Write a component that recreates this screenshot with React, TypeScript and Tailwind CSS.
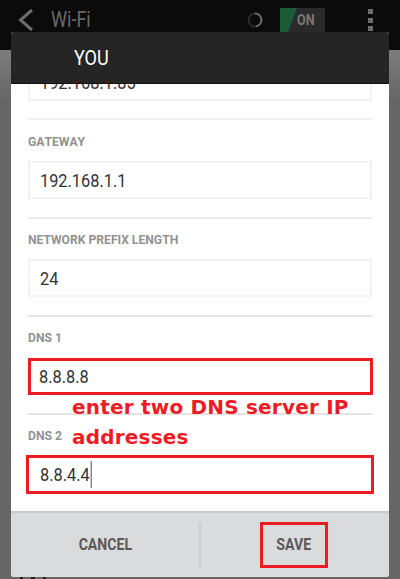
import React from "react";

const font = { fontFamily: "Roboto, 'Liberation Sans', sans-serif" };

function Label({ children }: { children: React.ReactNode }) {
  return (
    <div className="flex h-[40px] items-center">
      <span className="inline-block origin-left scale-x-[0.9] whitespace-nowrap text-[13.5px] font-bold text-[#929292] [font-kerning:none]">{children}</span>
    </div>
  );
}

function Field({ children, caret, className }: { children: React.ReactNode; caret?: boolean; className: string }) {
  return (
    <div className={`flex shrink-0 items-center ${className}`}>
      <span className="inline-flex origin-left scale-x-[0.86] items-center whitespace-nowrap text-[19px] leading-[27px] text-[#333333]">
        {children}
        {caret && <span className="ml-px inline-block h-[27px] w-px bg-[#333333]" />}
      </span>
    </div>
  );
}

export default function App() {
  return (
    <div className="relative flex h-[579px] w-[400px] flex-col overflow-hidden bg-[#666666]" style={font}>
      <div className="flex h-[50px] shrink-0 items-start bg-[#0b0b0b]">
        <svg width="16" height="24" viewBox="0 0 16 24" className="ml-[17px] mt-[8px]" fill="none" stroke="#6b6b6b" strokeWidth="3">
          <path d="M15 2 L3.5 12 L15 22" />
        </svg>
        <span className="ml-[18px] mt-[6px] inline-block origin-left scale-x-[0.82] text-[22px] leading-[28px] text-[#6a6a6a]">Wi-Fi</span>
      </div>
      <div className="h-[50px] shrink-0 bg-gradient-to-b from-[#7c7c7c] to-[#666666]" />
      <div className="mt-auto flex h-[2px] gap-[8px] pl-[20px]">
        <span className="block h-[2px] w-[3px] bg-[#222222]" />
        <span className="block h-[2px] w-[4px] bg-[#222222]" />
        <span className="block h-[2px] w-[3px] bg-[#222222]" />
      </div>

      <div className="absolute left-[247px] top-[12px]">
        <svg width="16" height="16" viewBox="0 0 16 16" fill="none" strokeWidth="2">
          <circle cx="8" cy="8" r="6.5" stroke="#2b2b2b" />
          <path d="M8 1.5 A6.5 6.5 0 0 1 9 14.4" stroke="#6a6a6a" />
        </svg>
      </div>
      <div className="absolute left-[280px] top-[8px] flex h-[24px] w-[45px] items-center justify-end overflow-hidden bg-[#2a2a2a] pr-[9px]">
        <svg width="45" height="24" viewBox="0 0 45 24" className="absolute left-0 top-0">
          <path d="M0 0 H17 L8 24 H0 Z" fill="#1d5a37" />
        </svg>
        <span className="relative inline-block scale-x-[0.9] text-[14px] font-bold text-[#7a7a7a]">ON</span>
      </div>
      <div className="absolute left-[368px] top-[9px] flex flex-col gap-[3.5px]">
        <span className="block h-[5px] w-[5px] bg-[#6e6e6e]" />
        <span className="block h-[5px] w-[5px] bg-[#6e6e6e]" />
        <span className="block h-[5px] w-[5px] bg-[#6e6e6e]" />
      </div>

      <div className="absolute left-[11px] top-[32px] flex h-[545px] w-[378px] flex-col overflow-hidden rounded-[3px] bg-white">
        <div className="flex h-[52px] shrink-0 items-center border-b border-[#111111] bg-[#252525] pl-[63px] pt-[3px]">
          <span className="inline-block origin-left scale-x-[0.86] text-[21px] text-white">YOU</span>
        </div>

        <div className="relative flex min-h-0 flex-1 flex-col overflow-hidden px-[17px]">
          <div className="-mt-[21px] flex shrink-0 flex-col">
            <Field className="h-[38px] border-2 border-[#f2f2f2] pl-[10px]">192.168.1.85</Field>
            <div className="mb-px mt-[17px] h-[2px] bg-[#f0f0f0]" />
            <Label>GATEWAY</Label>
            <Field className="h-[38px] border-2 border-[#f2f2f2] pl-[10px]">192.168.1.1</Field>
            <div className="mt-[18px] h-[2px] bg-[#ececec]" />
            <Label>NETWORK PREFIX LENGTH</Label>
            <Field className="h-[38px] border-2 border-[#f2f2f2] pl-[10px]">24</Field>
            <div className="mt-[18px] h-[2px] bg-[#e6e6e6]" />
            <Label>DNS 1</Label>
            <Field className="mt-px h-[37px] -mr-px border-[3px] border-[#ed1c24] pl-[8px]">8.8.8.8</Field>
            <div className="mt-[18px] h-[2px] bg-[#e4e4e4]" />
            <Label>DNS 2</Label>
            <Field caret className="-mx-[2px] h-[39px] border-[3px] border-[#ed1c24] pl-[11px]">8.8.4.4</Field>
          </div>
        </div>

        <div className="flex h-[66px] shrink-0 items-center border-t-2 border-[#c9c9c9] bg-[#dadbdc]">
          <div className="flex h-[44px] w-[190px] items-center justify-center border-r-2 border-[#cbcbcb]">
            <span className="inline-block scale-x-[0.88] text-[16px] font-bold text-[#595959]">CANCEL</span>
          </div>
          <div className="flex flex-1 items-center justify-center">
            <div className="-ml-[2px] flex h-[46px] w-[68px] items-center justify-center border-[3px] border-[#ed1c24]">
              <span className="inline-block scale-x-[0.88] text-[16px] font-bold text-[#595959]">SAVE</span>
            </div>
          </div>
        </div>
      </div>

      <div
        className="absolute left-[72px] top-[392px] text-[20px] font-bold leading-[30px] tracking-[0.2px] text-[#ed1c24]"
        style={{ fontFamily: "'DejaVu Sans', sans-serif" }}
      >
        <div className="whitespace-nowrap">enter two DNS server IP</div>
        <div>addresses</div>
      </div>
    </div>
  );
}
